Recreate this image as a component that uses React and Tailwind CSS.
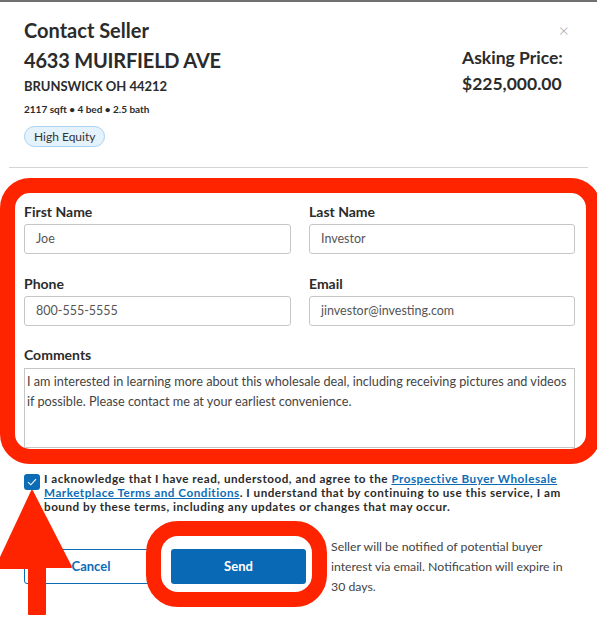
import React from "react";

export default function App() {
  return (
    <div className="relative w-[597px] h-[618px] overflow-hidden bg-white text-[#2b2b2b] font-['Lato',sans-serif]">
      <div className="h-[2px] bg-[#707070]" />
      <div className="px-6">
        {/* Header */}
        <div className="flex items-start justify-between pt-[16px]">
          <div className="flex flex-col">
            <div className="text-[20px] leading-[24px] font-bold">Contact Seller</div>
            <div className="mt-[6px] text-[20px] leading-[24px] font-bold tracking-[-0.2px]">4633 MUIRFIELD AVE</div>
            <div className="mt-[5px] text-[13px] leading-[18px] font-bold">BRUNSWICK OH 44212</div>
            <div className="mt-[7px] text-[10px] leading-[14px] font-bold">2117 sqft • 4 bed • 2.5 bath</div>
            <div className="mt-[10px] self-start h-[21px] px-[9px] flex items-center rounded-full border border-[#a9d3f0] bg-[#e4f2fc] text-[12px] text-[#333]">
              High Equity
            </div>
          </div>
          <div className="flex flex-col w-[107px] mr-[4px]">
            <div className="flex justify-end mt-[5px] h-[14px] items-center text-[#a8a8a8] text-[18px] leading-[14px] font-light">×</div>
            <div className="mt-[11px] text-[17.5px] leading-[20px] font-bold">Asking Price:</div>
            <div className="mt-[6px] text-[17.5px] leading-[20px] font-bold">$225,000.00</div>
          </div>
        </div>

        <div className="mt-[20px] -mx-[15px] h-px bg-[#d4d4d4]" />

        {/* Form with red highlight */}
        <div className="mt-[10px] -ml-6 w-[601px] border-[15px] border-[#ff2400] rounded-[30px] pl-[9px] pr-[11px] pt-[11px] pb-px">
          <div className="grid grid-cols-[267px_266px] gap-x-[18px]">
            <div>
              <div className="text-[14px] leading-[16px] font-bold">First Name</div>
              <div className="mt-[4px] h-[30px] border border-[#c6c6c6] rounded-[3px] px-[11px] flex items-center text-[12.5px] text-[#555]">Joe</div>
            </div>
            <div>
              <div className="text-[14px] leading-[16px] font-bold">Last Name</div>
              <div className="mt-[4px] h-[30px] border border-[#c6c6c6] rounded-[3px] px-[11px] flex items-center text-[12.5px] text-[#555]">Investor</div>
            </div>
            <div className="mt-[22px]">
              <div className="text-[14px] leading-[16px] font-bold">Phone</div>
              <div className="mt-[4px] h-[30px] border border-[#c6c6c6] rounded-[3px] px-[11px] flex items-center text-[12.5px] text-[#555]">800-555-5555</div>
            </div>
            <div className="mt-[22px]">
              <div className="text-[14px] leading-[16px] font-bold">Email</div>
              <div className="mt-[4px] h-[30px] border border-[#c6c6c6] rounded-[3px] px-[11px] flex items-center text-[12.5px] text-[#555]">jinvestor@investing.com</div>
            </div>
          </div>
          <div className="mt-[21px]">
            <div className="text-[14px] leading-[16px] font-bold">Comments</div>
            <div className="mt-[5px] h-[80px] border border-[#c6c6c6] px-[2px] pt-[2px] text-[12.7px] leading-[20px] text-[#444]">
              I am interested in learning more about this wholesale deal, including receiving pictures and videos
              <br />
              if possible. Please contact me at your earliest convenience.
            </div>
          </div>
        </div>

        {/* Acknowledge */}
        <div className="mt-[7px] flex items-start gap-[4px]">
          <div className="mt-[3px] w-[16px] h-[16px] shrink-0 rounded-[3px] bg-[#0d6cb6] flex items-center justify-center">
            <svg width="10" height="8" viewBox="0 0 10 8" fill="none">
              <path d="M1 4.2 L3.8 6.8 L9 1.2" stroke="white" strokeWidth="1.1" />
            </svg>
          </div>
          <div className="text-[11.7px] leading-[14px] tracking-[0.5px] font-bold text-[#2b2b2b] whitespace-nowrap">
            I acknowledge that I have read, understood, and agree to the{" "}
            <span className="text-[#0e6cb5] underline">
              Prospective Buyer Wholesale
              <br />
              Marketplace Terms and Conditions
            </span>
            . I understand that by continuing to use this service, I am
            <br />
            bound by these terms, including any updates or changes that may occur.
          </div>
        </div>

        {/* Buttons */}
        <div className="mt-[24px] flex items-start">
          <div className="mt-[12px] w-[134px] h-[35px] border border-[#0d6cb6] rounded-[3px] flex items-center justify-center text-[13px] font-bold text-[#0d6cb6]">
            Cancel
          </div>
          <div className="relative mt-[12px] ml-[13px]">
            <div className="w-[135px] h-[35px] rounded-[3px] bg-[#0a69b4] flex items-center justify-center text-[13px] font-bold text-white">
              Send
            </div>
            <div className="absolute left-[-25px] top-[-28px] w-[181px] h-[86px] border-[15px] border-[#ff2400] rounded-[32px]" />
          </div>
          <div className="ml-[25px] text-[12.3px] leading-[20px] text-[#444] whitespace-nowrap">
            Seller will be notified of potential buyer
            <br />
            interest via email. Notification will expire in
            <br />
            30 days.
          </div>
        </div>
      </div>

      {/* Red arrow annotation */}
      <svg className="absolute left-0 top-0 pointer-events-none" width="597" height="618" viewBox="0 0 597 618">
        <path d="M32 491 L-4 568 L29 568 L29 614 L45 614 L45 567 L71 567 Z" fill="#ff2400" strokeLinejoin="round" stroke="#ff2400" strokeWidth="2" />
      </svg>
    </div>
  );
}
